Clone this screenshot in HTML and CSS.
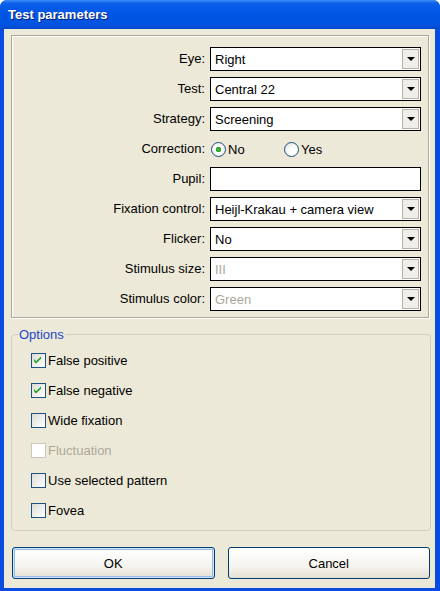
FILE: index.html
```html
<!DOCTYPE html>
<html lang="en">
<head>
    <meta charset="UTF-8">
    <title>Test parameters</title>
    <link rel="stylesheet" href="styles.css">
</head>
<body>
    <div class="window">
        <div class="titlebar">Test parameters</div>
        <div class="client">
            <div class="panel">
                <div class="form">
                    <label>Eye:</label>
                    <div class="combo"><span>Right</span><i></i></div>
                    <label>Test:</label>
                    <div class="combo"><span>Central 22</span><i></i></div>
                    <label>Strategy:</label>
                    <div class="combo"><span>Screening</span><i></i></div>
                    <label>Correction:</label>
                    <div class="radios">
                        <span class="radio on">No</span>
                        <span class="radio">Yes</span>
                    </div>
                    <label>Pupil:</label>
                    <div class="edit"></div>
                    <label>Fixation control:</label>
                    <div class="combo"><span>Heijl-Krakau + camera view</span><i></i></div>
                    <label>Flicker:</label>
                    <div class="combo"><span>No</span><i></i></div>
                    <label>Stimulus size:</label>
                    <div class="combo disabled"><span>III</span><i></i></div>
                    <label>Stimulus color:</label>
                    <div class="combo disabled"><span>Green</span><i></i></div>
                </div>
            </div>
            <fieldset class="options">
                <legend>Options</legend>
                <div class="check on">False positive</div>
                <div class="check on">False negative</div>
                <div class="check">Wide fixation</div>
                <div class="check disabled">Fluctuation</div>
                <div class="check">Use selected pattern</div>
                <div class="check">Fovea</div>
            </fieldset>
            <div class="buttons">
                <button class="default">OK</button>
                <button>Cancel</button>
            </div>
        </div>
    </div>
</body>
</html>
```

FILE: styles.css
```css
*{margin:0;padding:0;box-sizing:border-box;}
body{font-family:"Liberation Sans",Arial,sans-serif;font-size:13px;color:#000;}
.window{
    display:flex;
    flex-direction:column;
    height:591px;
    background:#0a4be0;
    border-radius:7px 7px 0 0;
}
.titlebar{
    height:29px;
    padding-left:8px;
    line-height:30px;
    color:#fff;
    font-weight:bold;
    font-size:13px;
    text-shadow:1px 1px 0 #0a1e6e;
    border-radius:7px 7px 0 0;
    background:linear-gradient(#3c8cf8 0%,#0a5ee8 12%,#0055e5 50%,#0054e0 85%,#0048c8 100%);
}
.client{
    flex:1;
    margin:0 5px 4px 4px;
    padding:6px 5px 9px 7px;
    background:#ece9d8;
    display:flex;
    flex-direction:column;
}
.panel{
    border:1px solid #aca899;
    box-shadow:inset 1px 1px 0 #fff,1px 1px 0 #fff;
    padding:11px 7px 6px 0;
    margin-right:1px;
}
.form{
    display:grid;
    grid-template-columns:1fr 211px;
    grid-auto-rows:24px;
    column-gap:5px;
    row-gap:6px;
}
.form label{
    text-align:right;
    line-height:24px;
}
.combo,.edit{
    display:flex;
    align-items:center;
    background:#fff;
    border:1px solid #000;
}
.combo span{
    flex:1;
    padding-left:4px;
}
.combo.disabled span{color:#aca899;}
.combo i{
    width:17px;
    height:20px;
    margin-right:1px;
    background:#efeee8;
    border:1px solid #b5b2a6;
    position:relative;
}
/* arrow glyph on the drop button */
.combo i::after{
    content:'';
    position:absolute;
    left:4px;
    top:7px;
    border-left:4px solid transparent;
    border-right:4px solid transparent;
    border-top:4px solid #000;
}
.radios{
    display:flex;
    align-items:center;
}
.radio{
    display:flex;
    align-items:center;
    width:73px;
}
.radio::before{
    content:'';
    width:13px;
    height:13px;
    margin:0 2px 0 1px;
    border:1px solid #1c5180;
    border-radius:50%;
    background:radial-gradient(circle at 60% 65%,#fff 30%,#dcdcd5 100%);
}
.radio.on::before{
    background:radial-gradient(circle,#4dbf38 0,#21a121 2.5px,#fff 3px,#fff 40%,#dcdcd5 100%);
}
.options{
    margin-top:9px;
    border:1px solid #d0d0bf;
    border-radius:4px;
    padding:3px 0 5px 19px;
    margin-right:-1px;
}
.options legend{
    margin-left:-13px;
    padding:0 1px;
    color:#2446c8;
    line-height:15px;
}
.check{
    display:flex;
    align-items:center;
    height:30px;
}
.check::before{
    content:'';
    width:13px;
    height:13px;
    margin-right:2px;
    border:1px solid #1c5180;
    background:linear-gradient(135deg,#dcdcd7,#fff);
}
.check.on::before{
    background:url("data:image/svg+xml;utf8,<svg xmlns='http://www.w3.org/2000/svg' width='11' height='11'><path d='M2 5l2 2.2L9 2.5v2.2L4 9.4 2 7.2z' fill='%2321a121'/></svg>") no-repeat,linear-gradient(135deg,#dcdcd7,#fff);
}
.check.disabled{color:#aca899;}
.check.disabled::before{border-color:#cac8bb;background:#fff;}
.buttons{
    display:flex;
    gap:13px;
    margin-top:16px;
    padding-left:1px;
}
.buttons button{
    flex:1;
    height:32px;
    font-family:inherit;
    font-size:13px;
    border:1px solid #003c74;
    border-radius:3px;
    background:linear-gradient(#fff 0%,#f5f4ef 60%,#e3e0d3 100%);
}
.buttons button.default{
    box-shadow:inset 0 0 0 1px #cee7ff,inset 0 0 0 2px #98b8ea;
}
```
